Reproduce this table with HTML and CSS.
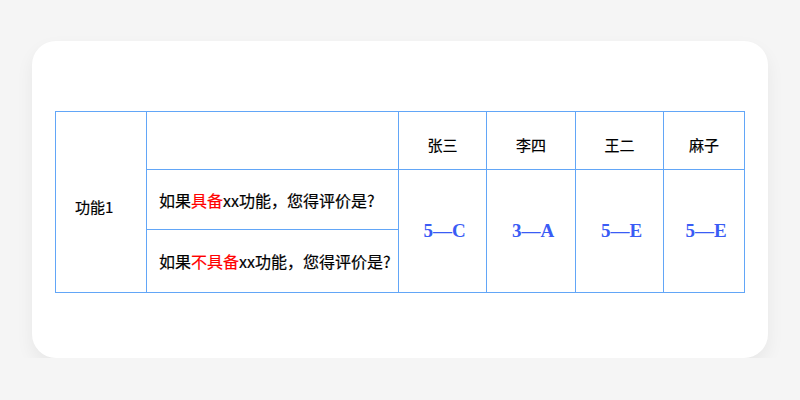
FILE: index.html
```html
<!DOCTYPE html>
<html lang="zh">
<head>
<meta charset="utf-8">
<link rel="stylesheet" href="styles.css">
</head>
<body>
<div class="card">
  <table class="grid">
    <colgroup>
      <col class="c-feature">
      <col class="c-question">
      <col class="c-p1">
      <col class="c-p2">
      <col class="c-p3">
      <col class="c-last">
    </colgroup>
    <tr class="r-head">
      <td class="feature" rowspan="3">功能1</td>
      <td></td>
      <td class="name">张三</td>
      <td class="name">李四</td>
      <td class="name">王二</td>
      <td class="name">麻子</td>
    </tr>
    <tr class="r-one">
      <td class="question">如果<span class="hl">具备</span>xx功能，您得评价是?</td>
      <td class="score" rowspan="2">5—C</td>
      <td class="score" rowspan="2">3—A</td>
      <td class="score" rowspan="2">5—E</td>
      <td class="score" rowspan="2">5—E</td>
    </tr>
    <tr class="r-two">
      <td class="question">如果<span class="hl">不具备</span>xx功能，您得评价是?</td>
    </tr>
  </table>
</div>
</body>
</html>
```

FILE: styles.css
```css
html, body {
  margin: 0;
  padding: 0;
  background: #f5f5f5;
}
body {
  font-family: "Noto Sans CJK SC", "Noto Sans", sans-serif;
  color: #000;
  padding: 41px 32px 0;
}
.card {
  background: #fff;
  border-radius: 24px;
  height: 317px;
  box-sizing: border-box;
  padding: 70px 23px 0;
  box-shadow: 0 8px 18px rgba(0, 0, 0, 0.06);
}
.grid {
  border-collapse: collapse;
  table-layout: fixed;
  width: 689px;
}
.grid td {
  border: 1px solid #62a6f7;
  padding: 0;
  font-size: 15px;
  line-height: 20px;
  -webkit-text-stroke: 0.2px #000;
}
.c-feature { width: 91px; }
.c-question { width: 252px; }
.c-p1 { width: 88px; }
.c-p2 { width: 89px; }
.c-p3 { width: 88px; }
.c-last { width: 81px; }
.r-head { height: 58px; }
.r-one { height: 60px; }
.r-two { height: 63px; }
.feature {
  padding: 9px 0 0 19px !important;
  vertical-align: middle;
}
.name {
  text-align: center;
  padding-top: 9px !important;
}
.question {
  padding-left: 12px !important;
  font-size: 16px !important;
}
.hl {
  color: #f00;
  -webkit-text-stroke: 0.2px #f00;
}
.score {
  text-align: center;
  font-family: "Liberation Serif", "Times New Roman", serif;
  font-weight: bold;
  font-size: 19px !important;
  color: #3a5cf5;
  -webkit-text-stroke: 0 !important;
  padding-left: 4px !important;
}
```
